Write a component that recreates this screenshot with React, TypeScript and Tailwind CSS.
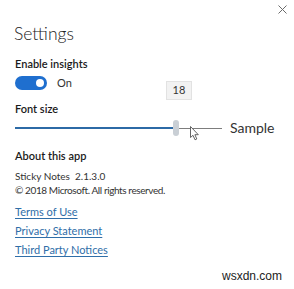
import { useState } from 'react';

export default function App() {
  const [insights, setInsights] = useState(true);
  const fontSize = 18;

  return (
    <div className="w-[294px] h-[289px] bg-white relative overflow-hidden font-['Lato',sans-serif] text-[#1b1b1b]">
      {/* Close */}
      <div className="flex justify-end pt-[5px] pr-[7px]">
        <svg width="9" height="9" viewBox="0 0 9 9" className="text-[#6b6b6b]">
          <path d="M0.5 0.5 L8.5 8.5 M8.5 0.5 L0.5 8.5" stroke="currentColor" strokeWidth="1" />
        </svg>
      </div>

      <div className="pl-[15px]">
        <h1 className="mt-[8px] text-[17.5px] leading-[24px] font-light text-[#222] -ml-[1px]">Settings</h1>

        {/* Insights */}
        <div className="mt-[10px] text-[11px] leading-[16px] font-semibold text-[#1b1b1b]">Enable insights</div>
        <div className="mt-[3px] flex items-center gap-[10px] h-[16px]">
          <button
            onClick={() => setInsights(!insights)}
            className={`w-[32px] h-[14px] rounded-full flex items-center px-[3px] ${insights ? 'bg-[#1f6fcf] justify-end' : 'bg-white border border-gray-500 justify-start'}`}
          >
            <span className="w-[8px] h-[8px] rounded-full bg-white" />
          </button>
          <span className="text-[11px] text-[#333]">{insights ? 'On' : 'Off'}</span>
        </div>

        {/* Font size */}
        <div className="mt-[10px] text-[11px] leading-[16px] font-semibold text-[#1b1b1b]">Font size</div>
        <div className="mt-[2px] flex items-center h-[18px]">
          <div className="relative w-[207px] h-[18px] flex items-center">
            <div className="w-[158px] h-[2px] bg-[#2c6aa6]" />
            <div className="w-[6px] h-[16px] rounded-[3px] bg-[#c9cfd5]" />
            <div className="flex-1 h-[1px] bg-[#7d7d7d]" />
            <div className="absolute left-[151px] -top-[38px] w-[26px] h-[19px] bg-[#f2f2f2] border border-[#e2e2e2] flex items-center justify-center text-[11px] text-[#333]">
              {fontSize}
            </div>
            <svg className="absolute left-[175px] top-[7px]" width="10" height="15" viewBox="0 0 10 15">
              <path d="M0.5 0.5 L0.5 11.5 L3 9.3 L5 13.8 L6.8 13 L4.9 8.7 L8.3 8.7 Z" fill="white" stroke="#555" strokeWidth="0.9" strokeLinejoin="round" />
            </svg>
          </div>
          <span className="ml-[8px] text-[14px] leading-[18px] text-[#333]">Sample</span>
        </div>

        {/* About */}
        <div className="mt-[11px] text-[11px] leading-[16px] font-semibold text-[#1b1b1b]">About this app</div>
        <div className="mt-[5px] text-[10px] leading-[14px] text-[#333]">Sticky Notes&nbsp;&nbsp;2.1.3.0</div>
        <div className="text-[10px] leading-[14px] tracking-[-0.4px] text-[#333]">© 2018 Microsoft. All rights reserved.</div>

        <div className="mt-[6px] flex flex-col gap-[1px] text-[11px] leading-[18px] text-[#2f6ea8]">
          <a className="underline underline-offset-2 self-start">Terms of Use</a>
          <a className="underline underline-offset-2 self-start">Privacy Statement</a>
          <a className="underline underline-offset-2 self-start">Third Party Notices</a>
        </div>
      </div>

      <div className="absolute right-[12px] bottom-[4px] text-[12px] font-['Liberation_Sans',sans-serif] text-[#222]">wsxdn.com</div>
    </div>
  );
}
